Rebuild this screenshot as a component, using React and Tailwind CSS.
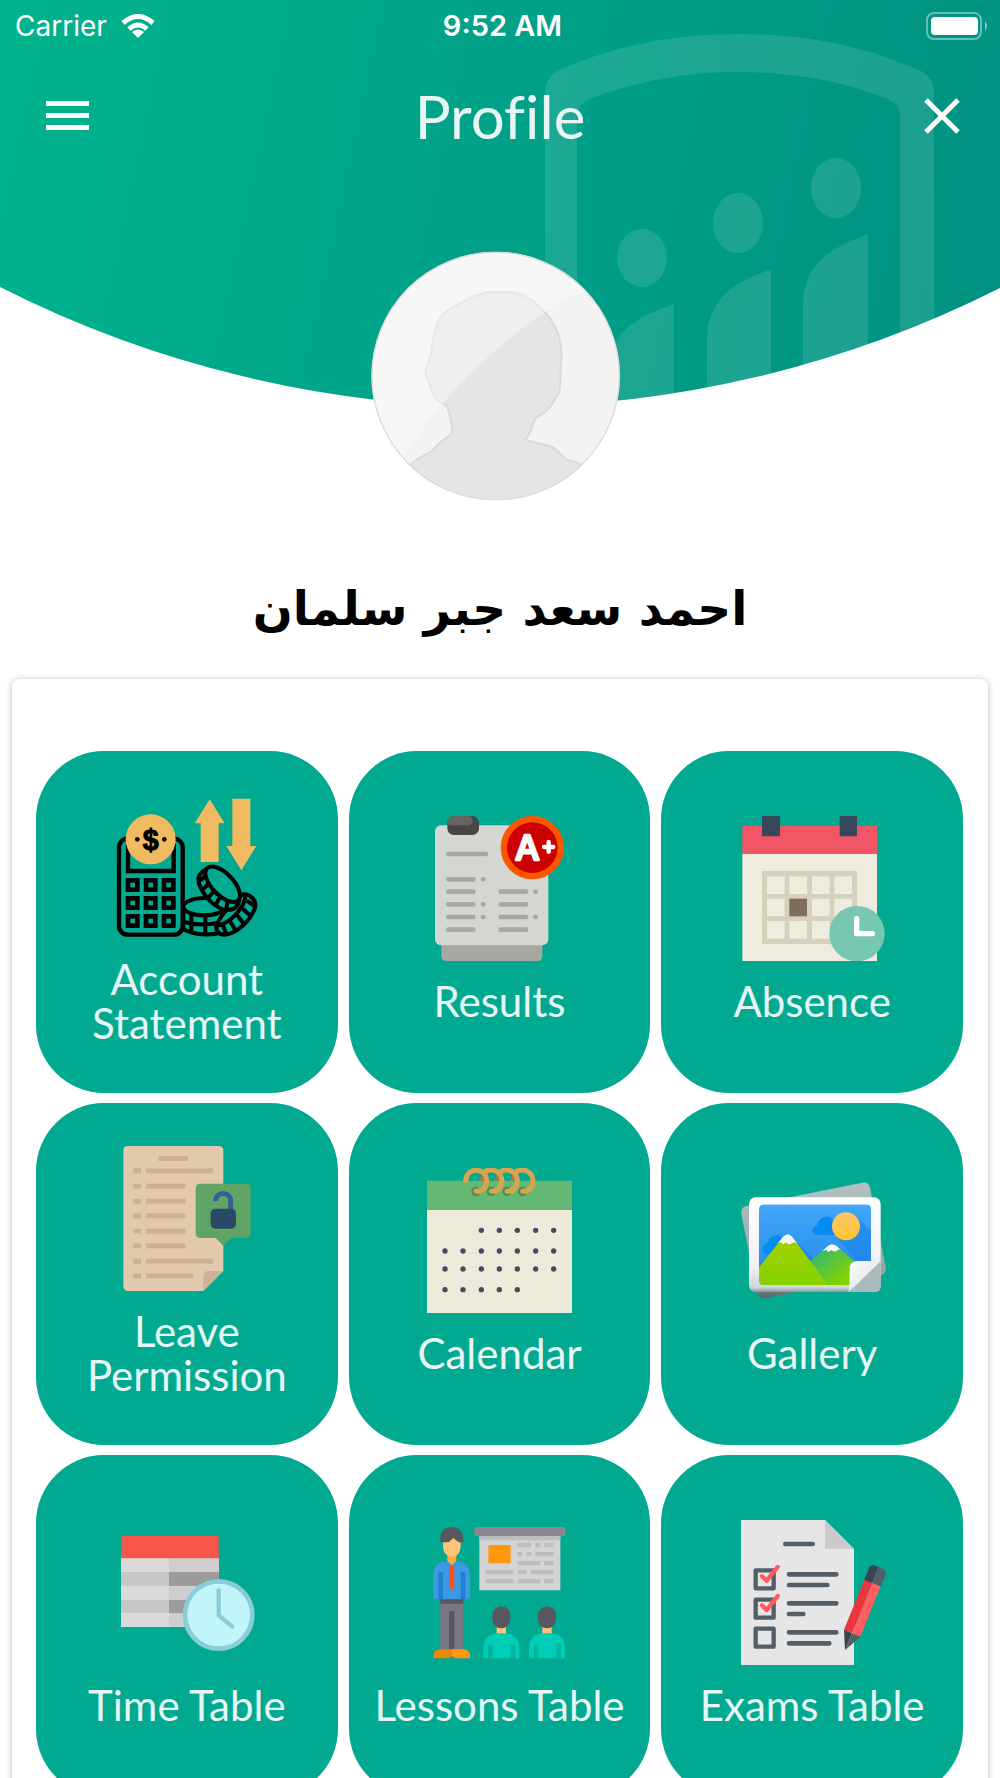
import { clsx } from 'clsx';

function AccountIcon() {
  const cells = [294, 348, 402].flatMap((y) => [109, 163, 217].map((x) => [x, y]));
  return (
    <svg viewBox="74 42 435 435" className="size-[145px]" aria-hidden="true">
      <g fill="none" stroke="#000" strokeWidth="13">
        <rect x="89" y="176" width="191" height="288" rx="26" />
        <path d="M116 190V273H253V190" />
        {cells.map(([x, y]) => (
          <rect key={`${x}-${y}`} x={x + 7} y={y + 7} width="28" height="28" strokeWidth="14" />
        ))}
      </g>
      <circle cx="184" cy="178" r="75" fill="#f0bb60" />
      <circle cx="144" cy="178" r="7" />
      <circle cx="225" cy="178" r="7" />
      <text x="184" y="209" textAnchor="middle" stroke="#000" strokeWidth="3" className="font-['Liberation_Sans'] text-[86px] font-bold">$</text>
      <path d="M361 58L406 130H388V246H334V130H316ZM429 56H483V198H501L456 271L411 198H429Z" fill="#f0bb60" />
      <g fill="#01a990" stroke="#000" strokeWidth="12" strokeLinejoin="round">
        <path d="M282 382V448Q340 474 402 456V382Z" />
        <path d="M284 426Q335 440 390 428M306 402V456M348 408V464" fill="none" />
        <ellipse cx="344" cy="380" rx="62" ry="26" />
        <path d="M444 352Q462 336 482 348Q502 362 497 384C482 424 440 464 404 464Q382 464 380 440C390 402 424 384 444 352Z" />
        <path d="M466 342C474 370 430 428 382 438M472 362L496 378M460 386L484 408M442 404L464 432M420 420L438 450M400 432L410 462" fill="none" />
        <path d="M350 268Q322 282 328 308C340 348 380 388 414 390Q446 390 450 358Z" />
        <path d="M350 288L330 302M358 312L338 330M374 334L356 354M392 350L380 374M416 360L410 388" fill="none" />
        <ellipse cx="400" cy="313" rx="67" ry="32" transform="rotate(46 400 313)" />
      </g>
    </svg>
  );
}

function ResultsIcon() {
  return (
    <svg viewBox="83 77 435 435" className="size-[145px]" aria-hidden="true">
      <path d="M126 450H429V496Q429 512 413 512H142Q126 512 126 496Z" fill="#a5a9a1" />
      <rect x="107" y="105" width="340" height="360" rx="18" fill="#d3d7cf" />
      <rect x="144" y="77" width="95" height="57" rx="20" fill="#464646" />
      <path d="M164 77H204Q220 77 220 91Q220 105 204 105H144V97Q144 77 164 77Z" fill="#646464" />
      <g stroke="#a5a9a1" strokeWidth="14" strokeLinecap="round">
        <path d="M147 191H260M147 267H222M147 304H222M147 342H222M147 380H222M147 418H222M304 304H380M304 342H380M304 380H380M304 418H380" />
        <path d="M251 267h1M251 342h1M251 380h1M408 304h1M408 380h1" />
      </g>
      <circle cx="399" cy="172" r="95" fill="#ff5500" />
      <circle cx="399" cy="172" r="76" fill="#cc0000" />
      <text x="384" y="208" textAnchor="middle" fill="#fff" stroke="#fff" strokeWidth="7" strokeLinejoin="round" className="font-['Inter'] text-[104px] font-medium">A</text>
      <path d="M448 155V184M434 170H462" stroke="#fff" strokeWidth="13" strokeLinecap="round" />
    </svg>
  );
}

function AbsenceIcon() {
  const cells = [258, 325, 392].flatMap((y) => [168, 235, 303, 370].map((x) => [x, y]));
  return (
    <svg viewBox="87 77 435 435" className="size-[145px]" aria-hidden="true">
      <path d="M94 190H498V512H94Z" fill="#efebde" />
      <path d="M94 107H498V190H94Z" fill="#f25565" />
      <path d="M153 77H207V138H153ZM386 77H438V138H386Z" fill="#38485c" />
      <path d="M153 242H438V461H153Z" fill="#d5d1bc" />
      {cells.map(([x, y]) => (
        <rect key={`${x}-${y}`} x={x} y={y} width="53" height="53" fill={x === 235 && y === 325 ? '#7f6e5d' : '#efebde'} />
      ))}
      <circle cx="438" cy="430" r="83" fill="#76c8b1" />
      <path d="M437 385V430H484" fill="none" stroke="#fff" strokeWidth="16" strokeLinecap="round" strokeLinejoin="round" />
    </svg>
  );
}

function LeaveIcon() {
  return (
    <svg viewBox="104 78 435 435" className="size-[145px]" aria-hidden="true">
      <path d="M146 78H418Q432 78 432 92V453L372 513H146Q132 513 132 499V92Q132 78 146 78Z" fill="#e2c9ae" />
      <path d="M372 513V469Q372 453 388 453H432Z" fill="#ceb097" />
      <g fill="#ceb097">
        <rect x="237" y="108" width="90" height="15" />
        {[[145, 202], [191, 119], [236, 119], [280, 119], [326, 119], [370, 119], [416, 202], [460, 142]].map(([y, w]) => (
          <g key={y}>
            <rect x="162" y={y} width="23" height="15" />
            <rect x="200" y={y} width={w} height="15" />
          </g>
        ))}
      </g>
      <path d="M363 191H500Q514 191 514 205V340Q514 354 500 354H455L432 377L409 354H363Q349 354 349 340V205Q349 191 363 191Z" fill="#5fa465" />
      <path d="M409 243C409 213 454 212 454 244V270" fill="none" stroke="#366092" strokeWidth="15" />
      <rect x="394" y="266" width="76" height="60" rx="14" fill="#2a4a67" />
    </svg>
  );
}

function CalendarIcon() {
  const weeks = [
    [270, 2, 7],
    [332, 0, 7],
    [386, 0, 7],
    [448, 0, 5],
  ];
  return (
    <svg viewBox="83 83 435 435" className="size-[145px]" aria-hidden="true">
      <path d="M83 208H518V518H83Z" fill="#edeada" />
      <path d="M83 121H518V208H83Z" fill="#65b873" />
      {[230, 276, 323, 370].map((x) => (
        <circle key={x} cx={x} cy="153" r="14" fill="#4c8b56" />
      ))}
      <path d="M238 121L247 102L256 121ZM284 121L293 102L302 121ZM331 121L340 102L349 121Z" fill="#a37b43" />
      <g fill="none" stroke="#daa44f" strokeWidth="15" strokeLinecap="round">
        <path d="M199 121C200 79 262 79 262 122Q260 153 230 153" />
        <path d="M256 94C283 80 308 98 308 122Q306 153 276 153" />
        <path d="M303 94C330 80 354 98 354 122Q352 153 323 153" />
        <path d="M350 94C377 80 401 98 401 122Q399 153 370 153" />
      </g>
      {weeks.map(([y, from, to]) =>
        [137, 191, 246, 300, 354, 409, 463]
          .slice(from, to)
          .map((x) => <circle key={`${x}-${y}`} cx={x} cy={y} r="8" fill="#434b64" />)
      )}
    </svg>
  );
}

function GalleryIcon() {
  return (
    <svg viewBox="87 53 435 435" className="size-[145px] overflow-visible" aria-hidden="true">
      <defs>
        <linearGradient id="frame" x2="0" y2="1">
          <stop offset="0" stopColor="#fff" />
          <stop offset=".75" stopColor="#eef1f2" />
          <stop offset=".95" stopColor="#d0d6d7" />
          <stop offset="1" stopColor="#8c9898" />
        </linearGradient>
        <linearGradient id="back" x2="0" y2="1">
          <stop offset="0" stopColor="#b2c1c1" />
          <stop offset=".8" stopColor="#94a4a4" />
          <stop offset="1" stopColor="#5c6666" />
        </linearGradient>
        <linearGradient id="sky" x2="0" y2="1">
          <stop offset="0" stopColor="#43a8f8" />
          <stop offset="1" stopColor="#1f86ea" />
        </linearGradient>
        <linearGradient id="hill" x2="0" y2="1">
          <stop offset="0" stopColor="#a7cf00" />
          <stop offset="1" stopColor="#84d300" />
        </linearGradient>
        <linearGradient id="farHill" x2="1" y2="1">
          <stop offset=".2" stopColor="#3cba68" />
          <stop offset=".8" stopColor="#80d205" />
        </linearGradient>
        <linearGradient id="sun" x2="0" y2="1">
          <stop offset="0" stopColor="#ffc768" />
          <stop offset="1" stopColor="#ffc52f" />
        </linearGradient>
        <linearGradient id="curl" x2="1" y2="1">
          <stop offset="0" stopColor="#fff" />
          <stop offset="1" stopColor="#ced8d8" />
        </linearGradient>
        <clipPath id="photo">
          <path d="M160 162H464Q480 162 480 178V332L415 404H160Q144 404 144 388V178Q144 162 160 162Z" />
        </clipPath>
      </defs>
      <path d="M106 167L454 97Q472 93 477 112L524 350Q527 370 510 375L163 443Q143 446 137 426L91 190Q89 171 106 167Z" fill="url(#back)" />
      <rect x="114" y="141" width="395" height="284" rx="20" fill="url(#frame)" />
      <g clipPath="url(#photo)">
        <path d="M144 162H480V404H144Z" fill="url(#sky)" />
        <path d="M318 254C300 254 300 226 319 226C318 202 352 190 364 206L400 254ZM170 312C150 310 152 280 170 278C172 256 200 250 210 258L220 310Z" fill="#048cf4" />
        <path d="M436 198L480 242V332L440 332L376 260Z" fill="#1d84e9" opacity=".6" />
        <path d="M244 262L310 330L290 350Z" fill="#1b7edf" opacity=".7" />
        <circle cx="405" cy="228" r="42" fill="url(#sun)" />
        <path d="M298 332L352 286Q364 278 378 288L430 334V404H340Z" fill="url(#farHill)" />
        <path d="M334 302L352 286Q364 278 378 288L393 302Q384 292 377 302Q366 306 362 298Q350 310 347 298Z" fill="#fff" />
        <path d="M144 352L216 260Q230 246 244 260L352 404H144Z" fill="url(#hill)" />
        <path d="M201 278L216 260Q230 244 244 260L259 281Q250 272 244 278Q232 286 226 276Q214 286 211 275Z" fill="#f7f7f7" />
      </g>
      <path d="M415 425L509 332V410Q509 425 492 425Z" fill="#aab9b9" />
      <path d="M412 425Q416 414 416 356Q416 332 442 332H509Q500 342 412 425Z" fill="url(#curl)" />
    </svg>
  );
}

function TimeTableIcon() {
  const rows = [
    [171, 42, '#dadada', '#cecece'],
    [213, 42, '#c7c7c7', '#9c9c9c'],
    [255, 40, '#dadada', '#cecece'],
    [295, 40, '#c7c7c7', '#9c9c9c'],
    [335, 41, '#dadada', '#cecece'],
  ];
  return (
    <svg viewBox="74 56 435 435" className="size-[145px]" aria-hidden="true">
      <path d="M97 160H387V375H97Z" fill="#cecece" />
      {rows.map(([y, h, left, right]) => (
        <g key={y} shapeRendering="crispEdges">
          <rect x="96" y={y} width="142" height={h} fill={left} />
          <rect x="238" y={y} width="150" height={h} fill={right} />
        </g>
      ))}
      <path d="M96 104H388V171H96Z" fill="#f9564a" />
      <circle cx="388" cy="341" r="101" fill="#c0f6fa" stroke="#89cdd8" strokeWidth="14" />
      <path d="M388 267V342L429 376" fill="none" stroke="#89cdd8" strokeWidth="13" strokeLinecap="round" strokeLinejoin="round" />
    </svg>
  );
}

function Student({ x }) {
  return (
    <g transform={`translate(${x} 0)`}>
      <path d="M40 375H68V405H40Z" fill="#ffc477" />
      <rect x="27" y="315" width="54" height="66" rx="27" fill="#58575d" />
      <path d="M0 471V440Q2 396 46 396H62Q106 396 108 440V471Z" fill="#00cdb5" />
      <path d="M14 430H28V471H14ZM82 430H96V471H82Z" fill="#00b59f" />
    </g>
  );
}

function LessonsIcon() {
  return (
    <svg viewBox="83 56 435 435" className="size-[145px]" aria-hidden="true">
      <path d="M240 104H483V267H240Z" fill="#d3d4d5" />
      <path d="M240 104H483V117H240Z" fill="#bdbec0" />
      <path d="M225 77H498V104H225Z" fill="#89888e" />
      <path d="M267 131H334V186H267Z" fill="#ff9811" />
      <path d="M355 124h40v14h-40zM408 124h15v14h-15zM435 124h28v14h-28zM355 152h13v13h-13zM382 152h13v13h-13zM408 152h55v13h-55zM355 179h68v13h-68zM435 179h28v13h-28zM258 206h84v13h-84zM355 206h27v13h-27zM394 206h69v13h-69zM258 233h84v13h-84zM355 233h68v13h-68zM435 233h28v13h-28z" fill="#bdbec0" />
      <path d="M144 155H171V190H144Z" fill="#ffac3e" />
      <path d="M131 118L157 104L184 118V136Q182 165 157 166Q132 162 131 136Z" fill="#ffc477" />
      <path d="M123 123V110C125 66 189 66 192 110V123H178L162 110L148 123Z" fill="#58575d" />
      <path d="M102 294V220Q104 180 145 180L157 192L170 180Q210 182 212 220V294Z" fill="#3c9ae4" />
      <path d="M117 213H131V294H117ZM184 213H198V294H184Z" fill="#1e81ce" />
      <path d="M149 192H165V262H149Z" fill="#fc4f27" />
      <path d="M123 294H192V444H123Z" fill="#797781" />
      <path d="M123 294H192V307H123ZM149 329H165V444H149Z" fill="#58575d" />
      <path d="M102 471V462Q104 444 122 444H157V465L145 471Z" fill="#ee8700" />
      <path d="M212 471V462Q210 444 192 444H157V465L170 471Z" fill="#ff9811" />
      <Student x={252} />
      <Student x={389} />
    </svg>
  );
}

function ExamsIcon() {
  return (
    <svg viewBox="117 56 435 435" className="size-[145px] overflow-visible" aria-hidden="true">
      <path d="M120 56H372L459 143V491H120Z" fill="#e6e6e6" />
      <path d="M372 56L459 143H372Z" fill="#cbcbcb" />
      <path d="M253 128H335M264 219H406M264 251H379M264 306H406M264 338H307M264 393H406M264 426H385" stroke="#545e69" strokeWidth="14" strokeLinecap="round" />
      {[207, 295, 382].map((y) => (
        <rect key={y} x="164" y={y} width="54" height="54" fill="none" stroke="#545e69" strokeWidth="13" strokeLinejoin="round" />
      ))}
      <path d="M183 225L197 238L230 197M183 312L197 326L230 284" fill="none" stroke="#ff5a5d" strokeWidth="13" strokeLinecap="round" strokeLinejoin="round" />
      <path d="M490 235L514 245L453 396L429 385Z" fill="#e93641" />
      <path d="M514 245L539 255L478 406L453 396Z" fill="#ff5f62" />
      <path d="M490 235L504 200Q510 188 523 193L532 197L514 245Z" fill="#3a444f" />
      <path d="M532 197L546 203Q559 210 554 222L539 255L514 245Z" fill="#545e69" />
      <path d="M429 385L453 396L432 447Z" fill="#3a444f" />
      <path d="M453 396L478 406L432 447Z" fill="#545e69" />
    </svg>
  );
}

const tiles = [
  { label: 'Account Statement', Icon: AccountIcon, narrow: true },
  { label: 'Results', Icon: ResultsIcon },
  { label: 'Absence', Icon: AbsenceIcon },
  { label: 'Leave Permission', Icon: LeaveIcon, narrow: true },
  { label: 'Calendar', Icon: CalendarIcon },
  { label: 'Gallery', Icon: GalleryIcon },
  { label: 'Time Table', Icon: TimeTableIcon },
  { label: 'Lessons Table', Icon: LessonsIcon },
  { label: 'Exams Table', Icon: ExamsIcon },
];

function HeaderBackground() {
  return (
    <svg viewBox="0 0 1000 408" preserveAspectRatio="none" className="absolute inset-0 h-full w-full" aria-hidden="true">
      <defs>
        <linearGradient id="header" gradientUnits="userSpaceOnUse" x1="0" y1="120" x2="980" y2="330">
          <stop offset="0" stopColor="#00b38c" />
          <stop offset=".5" stopColor="#00a188" />
          <stop offset="1" stopColor="#009281" />
        </linearGradient>
        <clipPath id="bowl">
          <path d="M0 0H1000V288A1110 1110 0 0 1 500 407A1110 1110 0 0 1 0 287Z" />
        </clipPath>
      </defs>
      <g clipPath="url(#bowl)">
        <path d="M0 0H1000V408H0Z" fill="url(#header)" />
        <g fill="#fff" fillOpacity=".11">
          <path d="M545 408V92Q545 78 558 71C610 47 670 34 739 34S868 47 921 71Q934 78 934 92V408H900V116Q900 105 888 99C840 81 795 72 739 72S640 81 589 99Q577 105 577 116V408Z" />
          <ellipse cx="642" cy="258" rx="25" ry="29" />
          <ellipse cx="738" cy="223" rx="25" ry="30" />
          <ellipse cx="836" cy="188" rx="25" ry="30" />
          <path d="M674 304V408H610V370C611 332 632 319 674 304ZM771 269V408H707V340C708 300 730 284 771 269ZM868 234V408H803V305C804 265 827 249 868 234Z" />
        </g>
      </g>
    </svg>
  );
}

function Avatar() {
  return (
    <svg viewBox="64 62 750 750" className="mr-2 size-[250px]" role="img" aria-label="Profile photo">
      <defs>
        <clipPath id="face">
          <circle cx="438" cy="437" r="373" />
        </clipPath>
      </defs>
      <g clipPath="url(#face)">
        <circle cx="438" cy="437" r="373" fill="#f3f3f3" />
        <path
          d="M412 186H488C545 195 570 232 590 250C620 285 637 330 636 380C630 420 635 450 629 485C615 500 605 545 560 560C548 575 555 590 527 628C560 640 590 642 612 652C640 672 640 690 665 692Q685 695 693 706C640 770 560 818 440 818C320 818 240 770 183 703C205 680 235 672 250 660C265 635 290 625 308 608C305 570 300 545 290 524C255 520 245 480 235 445Q222 432 230 415C245 390 245 350 252 320C262 250 300 235 330 220Q370 196 412 186Z"
          fill="#e5e5e5"
          stroke="#dadada"
          strokeWidth="6"
        />
        <path d="M150 700C240 540 400 380 560 262Q640 205 740 170L600 40H40V700Z" fill="#fff" opacity=".38" />
      </g>
      <circle cx="438" cy="437" r="371" fill="none" stroke="#dcdcdc" strokeWidth="4" />
    </svg>
  );
}

function StatusBar() {
  return (
    <div className="grid h-[52px] grid-cols-3 items-center pr-[10px] pl-[15px] font-['Inter',sans-serif] text-[28px] leading-8 text-white">
      <div className="flex items-center gap-[14px]">
        <span>Carrier</span>
        <svg viewBox="0 0 34 24" className="h-6 w-[34px]" fill="none" stroke="#fff" strokeWidth="5" aria-hidden="true">
          <path d="M2 9Q17 -4 32 9M8 15Q17 7 26 15" />
          <path d="M17 24L11 18Q17 13 23 18Z" fill="#fff" stroke="none" />
        </svg>
      </div>
      <span className="text-center text-[29px] font-semibold">9:52 AM</span>
      <svg viewBox="0 0 64 28" className="h-7 w-16 justify-self-end" fill="none" aria-hidden="true">
        <rect x="1" y="1" width="54" height="26" rx="7" stroke="#fff" strokeOpacity=".4" strokeWidth="2" />
        <rect x="5" y="5" width="47" height="18" rx="4" fill="#fff" />
        <path d="M59 9Q63 14 59 19Z" fill="#fff" fillOpacity=".5" />
      </svg>
    </div>
  );
}

function Tile({ label, Icon, narrow }) {
  return (
    <button
      type="button"
      className="flex h-[342px] cursor-pointer flex-col items-center justify-center rounded-[68px] bg-[#01a990] pb-[6px] text-[42px] leading-[44px] text-white/90"
    >
      <Icon />
      <span className={clsx('mt-[18px] text-center', narrow && 'max-w-[210px]')}>{label}</span>
    </button>
  );
}

export default function App() {
  return (
    <div className="flex h-screen flex-col overflow-y-auto bg-white font-['Lato',sans-serif] [scrollbar-width:none]">
      <header className="relative h-[408px] shrink-0">
        <HeaderBackground />
        <div className="relative">
          <StatusBar />
          <div className="grid h-[128px] grid-cols-3 items-center px-10 text-white">
            <button type="button" aria-label="Menu" className="cursor-pointer justify-self-start">
              <svg viewBox="0 0 50 30" className="h-[30px] w-[50px]" aria-hidden="true">
                <path d="M6 0H49V5H6ZM6 12H49V17H6ZM6 24H49V29H6Z" fill="#fff" />
              </svg>
            </button>
            <h1 className="text-center text-[60px] leading-[72px] text-white/90 [font-variant-ligatures:none]">Profile</h1>
            <button type="button" aria-label="Close" className="cursor-pointer justify-self-end">
              <svg viewBox="0 0 36 36" className="size-9" aria-hidden="true">
                <path d="M2 2L34 34M34 2L2 34" stroke="#fff" strokeWidth="5" />
              </svg>
            </button>
          </div>
        </div>
      </header>

      <section className="relative -mt-[157px] flex shrink-0 flex-col items-center">
        <Avatar />
        <h2 dir="rtl" lang="ar" className="mt-[68px] h-[110px] font-['DejaVu_Sans',sans-serif] text-[47px] leading-[80px] font-bold text-black">
          احمد سعد جبر سلمان
        </h2>
      </section>

      <main className="mx-3 grid shrink-0 grid-cols-3 gap-x-[11px] gap-y-[10px] rounded-lg bg-white pt-[72px] pr-[25px] pb-6 pl-6 shadow-[0_1px_6px_rgba(0,0,0,0.3)]">
        {tiles.map((tile) => (
          <Tile key={tile.label} {...tile} />
        ))}
      </main>
    </div>
  );
}
